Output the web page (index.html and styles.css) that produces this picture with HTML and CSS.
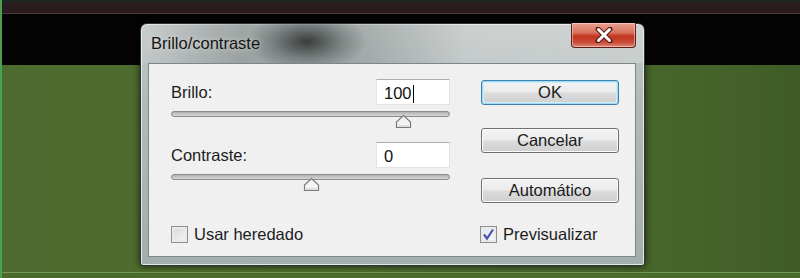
FILE: index.html
```html
<!DOCTYPE html>
<html lang="es">
<head>
    <meta charset="UTF-8">
    <title>Brillo/contraste</title>
    <link rel="stylesheet" href="styles.css">
</head>
<body>
    <div class="desk">
        <div class="topbar"></div>
        <div class="ground"></div>

        <div class="dialog">
            <div class="titlebar">
                <span class="title">Brillo/contraste</span>
                <div class="close-btn">
                    <svg width="18" height="16" viewBox="0 0 18 16">
                        <path d="M3 2 L15 14 M15 2 L3 14" stroke="#5a1a12" stroke-width="5" stroke-linecap="round"/>
                        <path d="M3.5 2.5 L14.5 13.5 M14.5 2.5 L3.5 13.5" stroke="#ffffff" stroke-width="3" stroke-linecap="round"/>
                    </svg>
                </div>
            </div>

            <div class="client">
                <div class="controls">
                    <div class="field">
                        <label>Brillo:</label>
                        <div class="num-input">100<span class="caret"></span></div>
                    </div>
                    <div class="slider">
                        <div class="track"></div>
                        <svg class="thumb" style="left: 224px" width="17" height="15" viewBox="0 0 17 15">
                            <path d="M1.5 13.5 L1.5 8 L8.5 1.5 L15.5 8 L15.5 13.5 Z" fill="#f4f4f4" stroke="#7a7a7a" stroke-width="1.2"/>
                            <path d="M3 12 L14 12" stroke="#c8c8c8" stroke-width="1"/>
                        </svg>
                    </div>

                    <div class="field">
                        <label>Contraste:</label>
                        <div class="num-input">0</div>
                    </div>
                    <div class="slider">
                        <div class="track"></div>
                        <svg class="thumb" style="left: 132px" width="17" height="15" viewBox="0 0 17 15">
                            <path d="M1.5 13.5 L1.5 8 L8.5 1.5 L15.5 8 L15.5 13.5 Z" fill="#f4f4f4" stroke="#7a7a7a" stroke-width="1.2"/>
                            <path d="M3 12 L14 12" stroke="#c8c8c8" stroke-width="1"/>
                        </svg>
                    </div>

                    <div class="check">
                        <span class="box"></span>
                        <span>Usar heredado</span>
                    </div>
                </div>

                <div class="actions">
                    <div class="btn default">OK</div>
                    <div class="btn">Cancelar</div>
                    <div class="btn">Automático</div>
                    <div class="check">
                        <span class="box checked">
                            <svg width="13" height="13" viewBox="0 0 13 13">
                                <path d="M2 6.5 L5 10.5 L11 1.5" fill="none" stroke="#4656a8" stroke-width="2.2"/>
                            </svg>
                        </span>
                        <span>Previsualizar</span>
                    </div>
                </div>
            </div>
        </div>
    </div>
</body>
</html>
```

FILE: styles.css
```css
:root {
    --text: #1c1c1c;
    --green: #4c6a2d;
    --frame: #b3bbba;
}

body {
    margin: 0;
    font-family: 'Liberation Sans', Arial, sans-serif;
    font-size: 16.5px;
    color: var(--text);
    background: var(--green);
}

.desk {
    position: relative;
    width: 800px;
    height: 278px;
    display: flex;
    flex-direction: column;
    border-left: 2px solid #49a04e;
    box-sizing: border-box;
    overflow: hidden;
}

.topbar {
    height: 62px;
    background: #040404;
    border-top: 3px solid #1d2620;
    box-shadow: inset 0 10px 0 #2a1c1c, inset 0 11px 0 #4a3c3c;
}

.ground {
    flex: 1;
    background: linear-gradient(to right, #4d6b2e 0%, #4f6e2f 40%, #46652a 85%, #3f5c26 100%);
    border-bottom: 1px solid #6f9a52;
    margin-bottom: 5px;
}

/* window */

.dialog {
    position: absolute;
    left: 138px;
    top: 23px;
    width: 505px;
    height: 243px;
    display: flex;
    flex-direction: column;
    border: 1px solid #2e3432;
    border-radius: 7px 7px 3px 3px;
    background: linear-gradient(to bottom, #c4cac9 0%, var(--frame) 30%, #a4aeac 100%);
    box-shadow: inset 0 0 0 1px #e4e8e8, 0 0 7px rgba(0,0,0,0.75);
    box-sizing: border-box;
}

.titlebar {
    height: 39px;
    display: flex;
    justify-content: space-between;
    align-items: flex-start;
    padding: 0 8px 0 10px;
    border-radius: 6px 6px 0 0;
    background:
        radial-gradient(ellipse 60px 30px at 33% 45%, rgba(30,34,34,0.8), rgba(60,66,66,0.35) 60%, transparent 100%),
        linear-gradient(to right, rgba(255,255,255,0.1) 0%, rgba(80,86,86,0.3) 20%, rgba(90,96,96,0.25) 45%, rgba(255,255,255,0.15) 65%, rgba(255,255,255,0.2) 100%);
}

.title {
    margin-top: 10px;
    font-size: 16.5px;
    color: #151515;
    text-shadow: 0 0 6px rgba(255,255,255,0.6);
}

.close-btn {
    width: 65px;
    height: 25px;
    margin-top: -1px;
    display: flex;
    align-items: center;
    justify-content: center;
    border: 1px solid #5e2019;
    border-top: none;
    border-radius: 0 0 4px 4px;
    background: linear-gradient(to bottom, #e9a493 0%, #d9735f 40%, #c2341f 55%, #c94a36 80%, #dc8a78 100%);
    box-shadow: inset 0 0 0 1px rgba(255,220,210,0.5);
    box-sizing: border-box;
}

.client {
    flex: 1;
    margin: 0 8px 8px 7px;
    background: #f0f0f0;
    border: 1px solid #7f8786;
    display: flex;
    gap: 31px;
    padding: 15px 0 0 22px;
}

.controls {
    width: 279px;
    display: flex;
    flex-direction: column;
}

.field {
    height: 26px;
    display: flex;
    justify-content: space-between;
    align-items: center;
}

.num-input {
    width: 74px;
    height: 26px;
    box-sizing: border-box;
    padding: 3px 0 0 7px;
    background: #ffffff;
    border: 1px solid #e2e3ea;
    border-top-color: #abadb3;
    color: #111;
    font-size: 16.5px;
    display: flex;
    align-items: center;
}

.caret {
    width: 1px;
    height: 18px;
    margin-left: 1px;
    background: #000;
}

.slider {
    position: relative;
    height: 37px;
}

.track {
    margin-top: 6px;
    height: 4px;
    border: 1px solid #8c8c8c;
    border-radius: 3px;
    background: linear-gradient(to bottom, #b0b0b0, #d8d8d8);
}

.thumb {
    position: absolute;
    top: 9px;
}

.check {
    display: flex;
    align-items: center;
    gap: 6px;
    margin-top: 20px;
}

.box {
    width: 17px;
    height: 17px;
    box-sizing: border-box;
    border: 1px solid #8e8f8f;
    background: linear-gradient(135deg, #d6d6d6, #f6f6f6);
    box-shadow: inset 0 0 0 2px #eaeaea;
    display: flex;
    align-items: center;
    justify-content: center;
}

.box.checked {
    background: linear-gradient(135deg, #e2e2ee, #fafafa);
}

.actions {
    width: 138px;
    display: flex;
    flex-direction: column;
    padding-top: 1px;
}

.btn {
    height: 25px;
    box-sizing: border-box;
    display: flex;
    align-items: center;
    justify-content: center;
    border: 1px solid #707070;
    border-radius: 3px;
    background: linear-gradient(to bottom, #f3f3f3 0%, #ebebeb 48%, #dcdcdc 52%, #cfcfcf 100%);
    box-shadow: inset 0 0 0 1px #fbfbfb;
    color: #1a1a1a;
    margin-bottom: 23px;
}

.btn + .btn {
    margin-bottom: 25px;
}

.btn.default {
    border-color: #3d7fae;
    box-shadow: inset 0 0 0 1px #9fdcf3, inset 0 0 0 2px #cdeef9;
}

.actions .check {
    margin-top: -3px;
    margin-left: -1px;
    gap: 6px;
}
```
